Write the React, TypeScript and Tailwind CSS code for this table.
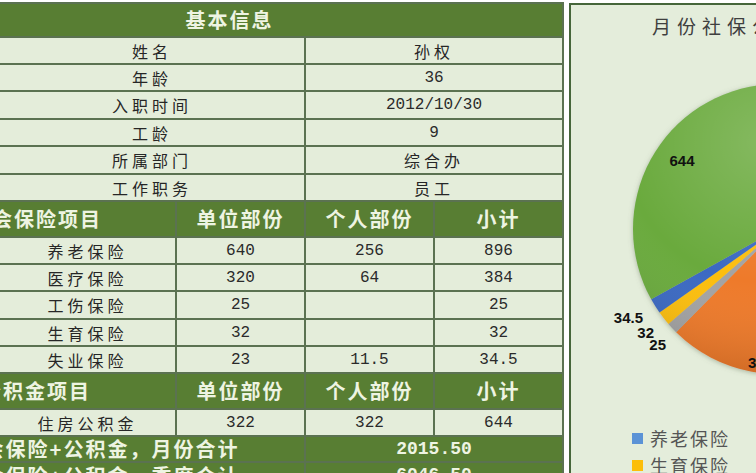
import React from 'react';

const cjk = "font-['Noto_Sans_CJK_SC',sans-serif]";
const mono = "font-['Liberation_Mono',monospace]";

const cell = `flex items-center justify-center bg-[#e4edda] text-[#262626] text-[16px] tracking-[4px] ${cjk}`;
const num = `flex items-center justify-center bg-[#e4edda] text-[#2a2a2a] text-[16px] ${mono}`;
const head = `flex items-center justify-center bg-[#587e33] text-[#eef4e2] font-bold text-[20px] tracking-[2px] ${cjk}`;
const headNum = `flex items-center justify-center bg-[#587e33] text-[#eef4e2] font-bold text-[18px] ${mono}`;

const basicInfo = [
  ['姓名', '孙权', false],
  ['年龄', '36', true],
  ['入职时间', '2012/10/30', true],
  ['工龄', '9', true],
  ['所属部门', '综合办', false],
  ['工作职务', '员工', false],
] as const;

const insurance = [
  ['养老保险', '640', '256', '896'],
  ['医疗保险', '320', '64', '384'],
  ['工伤保险', '25', '', '25'],
  ['生育保险', '32', '', '32'],
  ['失业保险', '23', '11.5', '34.5'],
];

// pie data, Excel default palette order
const slices = [
  { v: 896, c: '#4f86cf' },
  { v: 384, c: '#ee7a2c' },
  { v: 25, c: '#a3a3a3' },
  { v: 32, c: '#fcbe0a' },
  { v: 34.5, c: '#3a69c2' },
  { v: 644, c: '#6aaa3e' },
];

const CX = 207;
const CY = 182;
const R = 145;

function arcPath(a0: number, a1: number) {
  const r0 = (a0 * Math.PI) / 180;
  const r1 = (a1 * Math.PI) / 180;
  const x0 = CX + R * Math.cos(r0);
  const y0 = CY + R * Math.sin(r0);
  const x1 = CX + R * Math.cos(r1);
  const y1 = CY + R * Math.sin(r1);
  const large = a1 - a0 > 180 ? 1 : 0;
  return `M${CX} ${CY} L${x0} ${y0} A${R} ${R} 0 ${large} 1 ${x1} ${y1} Z`;
}

const PieChart: React.FC = () => {
  const total = slices.reduce((s, x) => s + x.v, 0);
  let a = -94;
  const paths = slices.map((s, i) => {
    const a0 = a;
    const a1 = a + (s.v / total) * 360;
    a = a1;
    return <path key={i} d={arcPath(a0, a1)} fill={s.c} />;
  });

  return (
    <svg width="416" height="378" viewBox="0 0 416 378">
      <defs>
        <radialGradient id="shine" cx="0.45" cy="0.2" r="0.8">
          <stop offset="0" stopColor="#ffffff" stopOpacity="0.18" />
          <stop offset="0.6" stopColor="#ffffff" stopOpacity="0" />
          <stop offset="1" stopColor="#000000" stopOpacity="0.12" />
        </radialGradient>
        <filter id="soft" x="-20%" y="-20%" width="140%" height="140%">
          <feDropShadow dx="0" dy="1" stdDeviation="2.5" floodColor="#6b7a60" floodOpacity="0.5" />
        </filter>
      </defs>
      <g filter="url(#soft)">{paths}</g>
      <circle cx={CX} cy={CY} r={R} fill="url(#shine)" />
      <g fontFamily="'Liberation Sans', sans-serif" fontWeight="bold" fontSize="15" fill="#111">
        <text x="111" y="113" textAnchor="middle" dominantBaseline="central">644</text>
        <text x="72" y="270" textAnchor="end" dominantBaseline="central">34.5</text>
        <text x="83" y="285" textAnchor="end" dominantBaseline="central">32</text>
        <text x="95" y="297" textAnchor="end" dominantBaseline="central">25</text>
        <text x="177" y="315" dominantBaseline="central">384</text>
      </g>
    </svg>
  );
};

const App: React.FC = () => {
  return (
    <div className="w-[756px] h-[473px] overflow-hidden bg-white flex">
      {/* table, its leftmost column runs off screen */}
      <div className="w-[564px] shrink-0 overflow-hidden">
        <div className="ml-[-105px] mt-[2px] w-[669px] grid grid-cols-[101px_175px_127px_127px_127px] grid-rows-[32px_25px_25px_26px_25px_26px_25px_34px_25px_25px_26px_25px_25px_34px_25px_24px_25px] gap-[2px] p-[2px] bg-[#5b7251]">
          <div className={`${head} col-span-5`}>基本信息</div>

          {basicInfo.map(([label, value, isNum]) => (
            <React.Fragment key={label}>
              <div className={cell}></div>
              <div className={`${cell} col-span-2`}>{label}</div>
              <div className={`${isNum ? num : cell} col-span-2`}>{value}</div>
            </React.Fragment>
          ))}

          <div className={`${head} col-span-2`}>社会保险项目</div>
          <div className={head}>单位部份</div>
          <div className={head}>个人部份</div>
          <div className={head}>小计</div>

          {insurance.map(([name, a, b, c]) => (
            <React.Fragment key={name}>
              <div className={cell}></div>
              <div className={cell}>{name}</div>
              <div className={num}>{a}</div>
              <div className={num}>{b}</div>
              <div className={num}>{c}</div>
            </React.Fragment>
          ))}

          <div className={`${head} col-span-2`}>公积金项目</div>
          <div className={head}>单位部份</div>
          <div className={head}>个人部份</div>
          <div className={head}>小计</div>

          <div className={cell}></div>
          <div className={cell}>住房公积金</div>
          <div className={num}>322</div>
          <div className={num}>322</div>
          <div className={num}>644</div>

          <div className={`${head} col-span-3`}>社会保险+公积金，月份合计</div>
          <div className={`${headNum} col-span-2`}>2015.50</div>
          <div className={`${head} col-span-3`}>社会保险+公积金，季度合计</div>
          <div className={`${headNum} col-span-2`}>6046.50</div>
        </div>
      </div>

      {/* chart panel */}
      <div className="ml-[5px] mt-[3px] w-[420px] h-[520px] shrink-0 border-2 border-[#46663a] bg-[#e4eddb] flex flex-col">
        <div className={`h-[42px] flex items-center pl-[81px] text-[19px] tracking-[6px] text-[#3f3f3f] ${cjk}`}>
          月份社保公积金构成
        </div>
        <PieChart />
        <div className={`pl-[61px] flex flex-col text-[18px] tracking-[2px] text-[#555] ${cjk}`}>
          <div className="h-[27px] flex items-center gap-[7px]">
            <span className="w-[11px] h-[11px] bg-[#5b93d6]"></span>
            养老保险
          </div>
          <div className="h-[27px] flex items-center gap-[7px]">
            <span className="w-[11px] h-[11px] bg-[#fcbe0a]"></span>
            生育保险
          </div>
        </div>
      </div>
    </div>
  );
};

export default App;
